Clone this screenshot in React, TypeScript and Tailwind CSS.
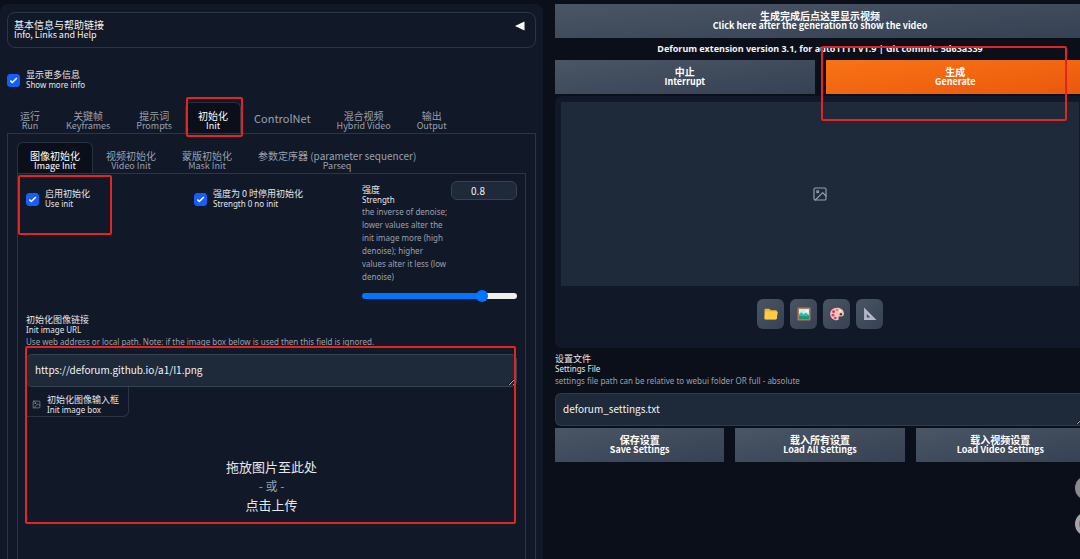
import { useState } from "react";
import type { ReactNode } from "react";
import clsx from "clsx";

type Text = { zh: string; en: string };

const mainTabs: Text[] = [
  { zh: "运行", en: "Run" },
  { zh: "关键帧", en: "Keyframes" },
  { zh: "提示词", en: "Prompts" },
  { zh: "初始化", en: "Init" },
  { zh: "", en: "ControlNet" },
  { zh: "混合视频", en: "Hybrid Video" },
  { zh: "输出", en: "Output" },
];

const initTabs: Text[] = [
  { zh: "图像初始化", en: "Image Init" },
  { zh: "视频初始化", en: "Video Init" },
  { zh: "蒙版初始化", en: "Mask Init" },
  { zh: "参数定序器 (parameter sequencer)", en: "Parseq" },
];

const settingsButtons: Text[] = [
  { zh: "保存设置", en: "Save Settings" },
  { zh: "载入所有设置", en: "Load All Settings" },
  { zh: "载入视频设置", en: "Load Video Settings" },
];

const Bilingual = ({ zh, en, small }: Text & { small?: boolean }) => (
  <span className="block">
    <span className={clsx("block leading-[10px]", small ? "text-[9px]" : "text-[10px]")}>{zh}</span>
    <span className={clsx("block leading-[10px]", small ? "font-['Noto_Sans',sans-serif] text-[8px]" : "text-[9px]")}>
      {en}
    </span>
  </span>
);

const Hint = ({ children }: { children: ReactNode }) => (
  <span className="block font-['Noto_Sans',sans-serif] text-[8px] leading-[13px] text-gray-400">{children}</span>
);

const TabBar = ({ tabs, active, onSelect }: { tabs: Text[]; active: string; onSelect: (tab: string) => void }) => (
  <div role="tablist" className="flex h-8 border-b border-gray-700/70">
    {tabs.map((tab) => (
      <button
        key={tab.en}
        role="tab"
        aria-selected={tab.en === active}
        onClick={() => onSelect(tab.en)}
        className={clsx(
          "flex items-center justify-center whitespace-nowrap rounded-t-md border border-b-0 px-3",
          tab.en === active ? "border-gray-700/70 bg-[#0b0f19] text-white" : "border-transparent text-gray-400"
        )}
      >
        {tab.zh ? (
          <span className="pt-1.5">
            <Bilingual zh={tab.zh} en={tab.en} />
          </span>
        ) : (
          <span className="text-[11px]">{tab.en}</span>
        )}
      </button>
    ))}
  </div>
);

const CheckField = ({ zh, en }: Text) => {
  const [checked, setChecked] = useState(true);

  return (
    <label className="flex items-center gap-1.5 text-gray-200">
      <span className="relative h-[13px] w-[13px]">
        <input
          type="checkbox"
          checked={checked}
          onChange={(e) => setChecked(e.target.checked)}
          className="block h-[13px] w-[13px] appearance-none rounded-[3px] border border-gray-600 bg-gray-800 checked:border-blue-600 checked:bg-blue-600"
        />
        {checked && (
          <svg viewBox="0 0 16 16" className="pointer-events-none absolute inset-0 h-full w-full" fill="white">
            <path d="M12.2 4.8a1 1 0 0 1 0 1.4l-5 5a1 1 0 0 1-1.4 0l-2-2a1 1 0 0 1 1.4-1.4l1.3 1.3 4.3-4.3a1 1 0 0 1 1.4 0z" />
          </svg>
        )}
      </span>
      <Bilingual zh={zh} en={en} small />
    </label>
  );
};

const ActionButton = ({ zh, en, primary }: Text & { primary?: boolean }) => (
  <button
    className={clsx(
      "flex h-[34px] flex-1 items-center justify-center font-bold text-white",
      primary ? "bg-gradient-to-br from-[#f97316] to-[#ea580c]" : "bg-gradient-to-br from-gray-600 to-gray-700"
    )}
  >
    <Bilingual zh={zh} en={en} />
  </button>
);

const ImageIcon = ({ className }: { className: string }) => (
  <svg viewBox="0 0 24 24" className={className} fill="none" stroke="currentColor" strokeWidth="1.7" strokeLinecap="round" strokeLinejoin="round">
    <rect x="3" y="3" width="18" height="18" rx="2" />
    <circle cx="8.5" cy="8.5" r="1.5" />
    <path d="M21 15l-5-5L5 21" />
  </svg>
);

const FolderIcon = () => (
  <svg viewBox="0 0 16 16" className="h-4 w-4">
    <path d="M1.5 4c0-.8.5-1.3 1.2-1.3h3.1c.5 0 .8.2 1.1.6l.8 1h5c.7 0 1.2.5 1.2 1.2V12c0 .8-.5 1.3-1.2 1.3H2.7c-.7 0-1.2-.5-1.2-1.3z" fill="#f5b73a" />
    <path d="M3.2 5.6h10.5c.7 0 1.2.5 1 1.2l-1 5.6c-.2.7-.6 1-1.2 1H2.6c-.7 0-1.1-.4-1-1.2l.5-5.6c.1-.7.5-1 1.1-1z" fill="#ffca45" />
  </svg>
);

const PictureIcon = () => (
  <svg viewBox="0 0 16 16" className="h-4 w-4">
    <rect x="1.5" y="1.5" width="13" height="13" rx=".8" fill="#b87953" />
    <path d="M3 3h10v10H3z" fill="#c3f0fb" />
    <circle cx="10.8" cy="5" r="1" fill="#fff" />
    <path d="M3 8.2l2.4-2 2.2 2 2.1-1.5L13 9v4H3z" fill="#34c08d" />
    <path d="M3 10.3c3-1 4.5.8 10-.6V13H3z" fill="#1b9474" />
  </svg>
);

const PaletteIcon = () => (
  <svg viewBox="0 0 16 16" className="h-4 w-4">
    <path d="M8.2 1.8C4 1.8 1.2 4.6 1.2 8s3 6.3 6.6 6.3c1.6 0 2.1-.9 1.8-2-.3-1.3.3-2.1 1.7-1.9 2.2.3 3.6-.6 3.6-2.7 0-3.4-2.8-5.9-6.7-5.9z" fill="#f6c5b8" />
    <circle cx="4" cy="9.2" r="1.4" fill="#e8336d" />
    <circle cx="4.6" cy="5.7" r="1.4" fill="#d72f55" />
    <circle cx="8" cy="4" r="1.3" fill="#f07a9a" />
    <circle cx="6.3" cy="12" r="1.3" fill="#b5426b" />
    <circle cx="11.9" cy="8.2" r="1.2" fill="#46333b" />
    <circle cx="11.2" cy="5" r="1" fill="#fff" />
  </svg>
);

const TriangleIcon = () => (
  <svg viewBox="0 0 16 16" className="h-4 w-4">
    <path d="M2 1.5L14.5 14H2zM4.8 8v3.4h3.5z" fill="#b4b9ca" fillRule="evenodd" />
    <path d="M2.2 4h1M2.2 6h1M2.2 8h1M2.2 10h1M2.2 12h1" stroke="#858b9f" strokeWidth=".5" />
  </svg>
);

const tools: { label: string; icon: ReactNode }[] = [
  { label: "Open folder", icon: <FolderIcon /> },
  { label: "Send to img2img", icon: <PictureIcon /> },
  { label: "Send to inpaint", icon: <PaletteIcon /> },
  { label: "Send to extras", icon: <TriangleIcon /> },
];

const StrengthSlider = () => {
  const [strength, setStrength] = useState(0.8);
  const percent = strength * 100;

  return (
    <div>
      <div className="flex items-start justify-between">
        <label htmlFor="strength" className="w-[89px] pt-1 text-gray-200">
          <Bilingual zh="强度" en="Strength" small />
          <Hint>
            the inverse of denoise; lower values alter the init image more (high denoise); higher
            <br />
            values alter it less (low denoise)
          </Hint>
        </label>
        <input
          aria-label="Strength value"
          value={strength}
          onChange={(e) => setStrength(Number(e.target.value) || 0)}
          className="h-[19px] w-[66px] shrink-0 rounded-md border border-gray-700 bg-gray-800 pr-3 text-center text-[10px] text-gray-100"
        />
      </div>
      <input
        id="strength"
        type="range"
        min={0}
        max={1}
        step={0.01}
        value={strength}
        onChange={(e) => setStrength(Number(e.target.value))}
        style={{ backgroundImage: `linear-gradient(to right, #0075ff ${percent}%, #efefef ${percent}%)` }}
        className="mt-2.5 block h-1.5 w-full appearance-none rounded-full [&::-webkit-slider-thumb]:h-3 [&::-webkit-slider-thumb]:w-3 [&::-webkit-slider-thumb]:appearance-none [&::-webkit-slider-thumb]:rounded-full [&::-webkit-slider-thumb]:bg-[#0075ff]"
      />
    </div>
  );
};

const SettingsPanel = () => {
  const [tab, setTab] = useState("Init");
  const [initTab, setInitTab] = useState("Image Init");

  return (
    <section className="rounded-t-lg bg-[#111827] px-[7px] pt-2">
      <button className="flex h-9 w-full items-center justify-between rounded-lg border border-gray-700/70 px-1.5 text-left text-gray-100">
        <Bilingual zh="基本信息与帮助链接" en="Info, Links and Help" />
        <svg viewBox="0 0 10 10" className="mr-1 mb-2 h-2.5 w-2.5" fill="white">
          <path d="M0 5l9.5-4.5v9z" />
        </svg>
      </button>

      <div className="mt-[22px]">
        <CheckField zh="显示更多信息" en="Show more info" />
      </div>

      <div className="mt-3">
        <TabBar tabs={mainTabs} active={tab} onSelect={setTab} />
        <div className="border-x border-gray-700/70 px-[9px] pt-2">
          <TabBar tabs={initTabs} active={initTab} onSelect={setInitTab} />

          <div className="h-[400px] border-x border-gray-700/70 px-2 pt-[7px]">
            <div className="grid grid-cols-3 gap-[13px]">
              <div className="pt-2">
                <CheckField zh="启用初始化" en="Use init" />
              </div>
              <div className="pt-2">
                <CheckField zh="强度为 0 时停用初始化" en="Strength 0 no init" />
              </div>
              <StrengthSlider />
            </div>

            <label className="mt-4 block text-gray-200">
              <Bilingual zh="初始化图像链接" en="Init image URL" small />
              <Hint>Use web address or local path. Note: if the image box below is used then this field is ignored.</Hint>
              <textarea
                rows={1}
                defaultValue="https://deforum.github.io/a1/I1.png"
                className="mt-1.5 block h-[33px] w-full rounded-md border border-gray-700 bg-gray-800 px-2 py-[7px] text-[10px] leading-4 text-gray-100"
              />
            </label>

            <div>
              <div className="flex h-[30px] w-[103px] items-center gap-1.5 rounded-br-md border-r border-b border-gray-700/70 pt-1.5 pl-1.5 text-gray-200">
                <ImageIcon className="h-[9px] w-[9px] text-gray-400" />
                <Bilingual zh="初始化图像输入框" en="Init image box" small />
              </div>
              <button className="mt-10 block w-full text-center text-[13px] leading-[19px] text-gray-200">
                <span className="block">拖放图片至此处</span>
                <span className="block text-xs leading-[19px] text-gray-400">- 或 -</span>
                <span className="block">点击上传</span>
              </button>
            </div>
          </div>
        </div>
      </div>
    </section>
  );
};

const OutputPanel = () => (
  <section>
    <div className="flex">
      <ActionButton zh="生成完成后点这里显示视频" en="Click here after the generation to show the video" />
    </div>
    <p className="h-[22px] text-center font-['Noto_Sans',sans-serif] text-[9px] leading-[22px] font-bold text-gray-100">
      Deforum extension version 3.1, for auto1111 v1.9 | Git commit: 5d63a339
    </p>
    <div className="flex gap-[11px]">
      <ActionButton zh="中止" en="Interrupt" />
      <ActionButton zh="生成" en="Generate" primary />
    </div>

    <div className="mt-0.5 rounded-md bg-[#111827] px-1.5 pt-1.5 pb-[19px]">
      <div className="flex h-[184px] items-center justify-center bg-gray-800">
        <ImageIcon className="h-4 w-4 text-gray-400" />
      </div>
      <div className="mt-[13px] flex justify-center gap-1.5">
        {tools.map((tool) => (
          <button
            key={tool.label}
            aria-label={tool.label}
            className="flex h-[30px] w-[27px] items-center justify-center rounded-md bg-gradient-to-br from-gray-600 to-gray-700"
          >
            {tool.icon}
          </button>
        ))}
      </div>
    </div>

    <label className="mt-1.5 block text-gray-200">
      <Bilingual zh="设置文件" en="Settings File" small />
      <Hint>settings file path can be relative to webui folder OR full - absolute</Hint>
      <textarea
        rows={1}
        defaultValue="deforum_settings.txt"
        className="mt-1.5 block h-[33px] w-full rounded-md border border-gray-700/70 bg-gray-800 px-[7px] py-[7px] text-[10px] leading-4 text-gray-100"
      />
    </label>
    <div className="mt-0.5 flex gap-[11px]">
      {settingsButtons.map((button) => (
        <ActionButton key={button.en} {...button} />
      ))}
    </div>
  </section>
);

const marks = [
  "left-[186px] top-[97px] w-[57px] h-10",
  "left-[18px] top-[175px] w-[94px] h-[60px]",
  "left-[25px] top-[346px] w-[491px] h-[178px]",
  "left-[821px] top-[46px] w-[246px] h-[75px]",
];

export default function App() {
  return (
    <main className="relative h-screen overflow-hidden bg-[#0b0f19] font-['Noto_Sans_CJK_SC',sans-serif]">
      <div className="-mr-[5px] grid grid-cols-[543fr_530fr] gap-3 pt-1">
        <SettingsPanel />
        <OutputPanel />
      </div>

      {marks.map((mark) => (
        <div key={mark} className={clsx("pointer-events-none absolute rounded-xs border-2 border-[#e3241f]", mark)} />
      ))}

      {/* Floating buttons, half off the right edge */}
      <button aria-label="Back to top" className="absolute top-[476px] -right-[19px] h-6 w-6 rounded-full bg-[#8b8b8e]" />
      <button aria-label="Favorite" className="absolute top-[512px] -right-[19px] h-6 w-6 rounded-full border-4 border-[#a5a5a8] bg-[#a65a68]" />
    </main>
  );
}
